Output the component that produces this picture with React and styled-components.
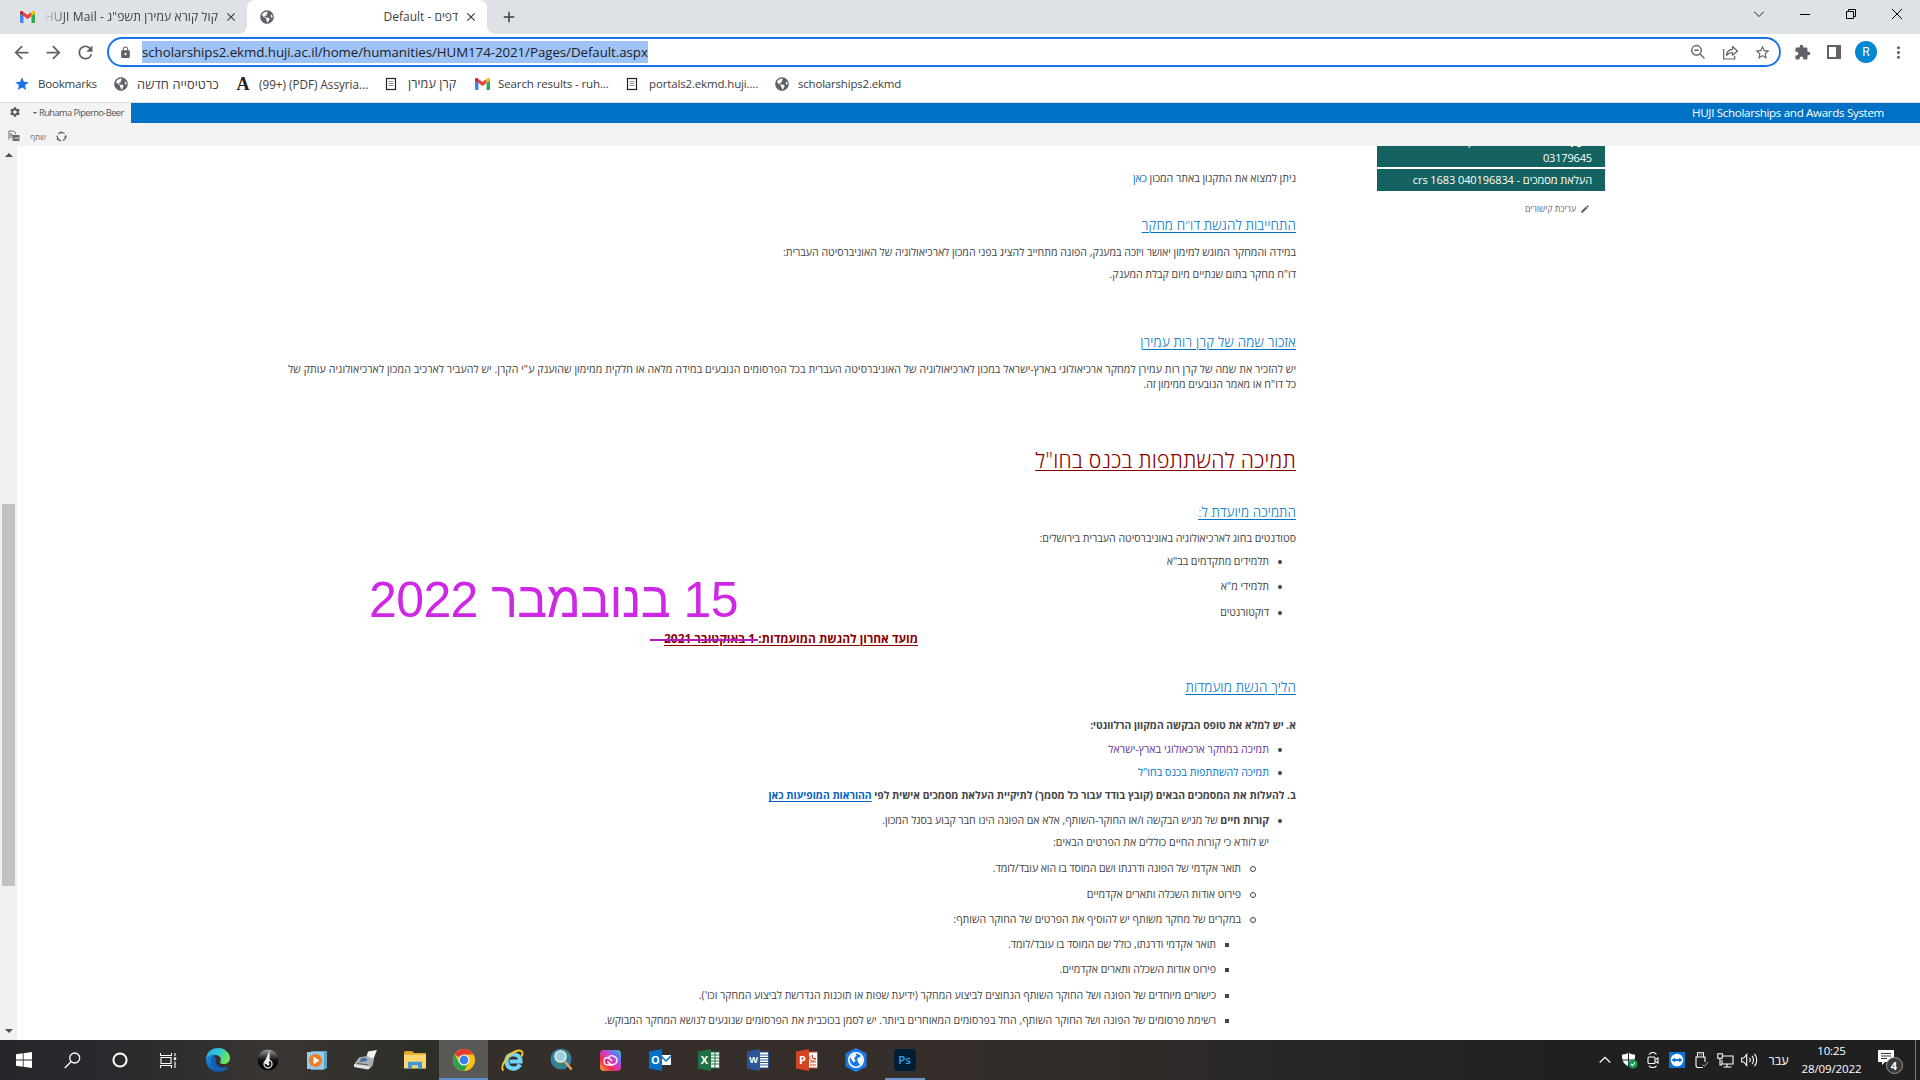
import React from "react";
import styled, { createGlobalStyle, css } from "styled-components";
import {
  MdArrowBack, MdArrowForward, MdRefresh, MdLock, MdStar, MdStarBorder,
  MdExtension, MdMoreVert, MdClose, MdAdd, MdEdit, MdSettings,
} from "react-icons/md";
import { FaGlobeAmericas } from "react-icons/fa";

const Global = createGlobalStyle`
  * { box-sizing: border-box; }
  body { margin: 0; background: #fff; overflow: hidden; }
`;

const Screen = styled.div`
  width: 1920px;
  height: 1080px;
  display: flex;
  flex-direction: column;
  overflow: hidden;
  background: #fff;
  font-family: "Open Sans", "Noto Sans", sans-serif;
  color: #444;
`;

const Text = styled.span`
  white-space: nowrap;
  font-size: ${(p) => p.$size || 12}px;
  letter-spacing: ${(p) => p.$ls || 0}px;
  font-weight: ${(p) => p.$weight || 400};
  color: ${(p) => p.$color || "inherit"};
`;

/* ---------- browser chrome ---------- */

const TabStrip = styled.div`
  height: 34px;
  flex: none;
  display: flex;
  background: #dee1e6;
`;

const Tab = styled.div`
  width: ${(p) => p.$w}px;
  height: 34px;
  display: flex;
  align-items: center;
  padding: 0 9px 0 ${(p) => p.$pad}px;
  color: #3c4043;
  position: relative;
  ${(p) => p.$active && css`
    background: #fff;
    border-radius: 8px 8px 0 0;
    &::before, &::after {
      content: "";
      position: absolute;
      bottom: 0;
      width: 8px;
      height: 8px;
    }
    &::before {
      left: -8px;
      background: radial-gradient(circle at 0 0, transparent 7.5px, #fff 8px);
    }
    &::after {
      right: -8px;
      background: radial-gradient(circle at 100% 0, transparent 7.5px, #fff 8px);
    }
  `}
`;

const TabTitle = styled.div`
  flex: 1;
  margin: 0 6px 0 9px;
  overflow: hidden;
  direction: rtl;
  display: flex;
  line-height: 20px;
  ${(p) => p.$fade && css`
    mask-image: linear-gradient(90deg, transparent 0, #000 22px);
  `}
`;

const NewTab = styled.div`
  width: 44px;
  display: grid;
  place-items: center;
  color: #3c4043;
  padding-bottom: 1px;
`;

const WindowButtons = styled.div`
  margin-left: auto;
  display: flex;
  height: 28px;
`;

const WindowButton = styled.div`
  width: 46px;
  display: grid;
  place-items: center;
`;

const Toolbar = styled.div`
  height: 35px;
  flex: none;
  display: flex;
  align-items: center;
  padding: 1px 6px 0 5px;
  color: #5f6368;
`;

const Cell = styled.div`
  width: ${(p) => p.$w || 32}px;
  flex: none;
  display: grid;
  place-items: center;
`;

const Omnibox = styled.div`
  flex: 1;
  height: 30px;
  margin: 0 5px 0 6px;
  border: 2px solid #1a73e8;
  border-radius: 15px;
  display: flex;
  align-items: center;
  padding-right: 1px;
`;

const Selection = styled.div`
  height: 22px;
  line-height: 21px;
  background: #9ec3f6;
  color: #202124;
  margin-right: auto;
`;

const Avatar = styled.div`
  width: 22px;
  height: 22px;
  border-radius: 50%;
  background: #0288d1;
  color: #fff;
  font: 12px/22px Roboto, sans-serif;
  text-align: center;
`;

const Bookmarks = styled.div`
  height: 34px;
  flex: none;
  display: flex;
  align-items: center;
  padding: 0 0 4px 14px;
  border-bottom: 1px solid #dadce0;
  color: #3c4043;
`;

const Bookmark = styled.div`
  width: ${(p) => p.$w}px;
  display: flex;
  align-items: center;
  gap: ${(p) => p.$gap || 8}px;
  color: #5f6368;
`;

/* ---------- site header ---------- */

const SuiteBar = styled.div`
  height: 20px;
  flex: none;
  display: flex;
  justify-content: space-between;
  align-items: stretch;
  background: #0072c6;
  color: #fff;
`;

const UserBox = styled.div`
  width: 131px;
  background: #f3f3f3;
  color: #555;
  display: flex;
  align-items: center;
  padding: 0 0 2px 9px;
`;

const Caret = styled.i`
  margin: 1px 2px 0 12px;
  border: 2.5px solid transparent;
  border-top-color: #555;
  border-bottom: 0;
`;

const SiteName = styled.div`
  display: flex;
  align-items: center;
  padding: 0 36px 2px 0;
`;

const Ribbon = styled.div`
  height: 23px;
  flex: none;
  background: #f3f3f3;
  display: flex;
  align-items: center;
  padding: 3px 0 0 7px;
  color: #666;
`;

/* ---------- page ---------- */

const Page = styled.div`
  height: 894px;
  flex: none;
  display: flex;
  overflow: hidden;
`;

const ScrollTrack = styled.div`
  width: 17px;
  background: #f1f1f1;
  display: flex;
  flex-direction: column;
  align-items: center;
`;

const ScrollArrow = styled.i`
  margin: ${(p) => (p.$down ? "auto 0 7px" : "7px 0 0")};
  border: 4px solid transparent;
  border-${(p) => (p.$down ? "top" : "bottom")}-color: #505050;
  border-${(p) => (p.$down ? "bottom" : "top")}: 0;
`;

const Thumb = styled.div`
  width: 13px;
  height: 382px;
  margin-top: 347px;
  background: #c1c1c1;
`;

const Article = styled.article`
  width: 1009px;
  margin-left: 270px;
  padding-top: 24px;
  position: relative;
  direction: rtl;
  font-size: 10.6px;
`;

const Line = styled.p`
  margin: ${(p) => p.$mt || 0}px ${(p) => p.$indent || 0}px 0 0;
  line-height: ${(p) => p.$lh || 16}px;
  white-space: nowrap;
  letter-spacing: ${(p) => p.$ls || 0}px;
  font-size: ${(p) => p.$size || 10.6}px;
  font-weight: ${(p) => (p.$bold ? 700 : 400)};
`;

const Heading = styled.h3`
  margin: ${(p) => p.$mt}px 0 0;
  font-size: ${(p) => p.$size || 13.5}px;
  line-height: ${(p) => p.$lh || 20}px;
  letter-spacing: ${(p) => (p.$ls === undefined ? 0.16 : p.$ls)}px;
  font-weight: 300;
  color: ${(p) => p.$color || "#0072c6"};
  text-decoration: underline;
  text-decoration-thickness: 1px;
  text-underline-offset: 1.5px;
  white-space: nowrap;
`;

const Item = styled(Line)`
  display: flex;
  align-items: center;
  white-space: pre;
  &::before {
    content: "";
    flex: none;
    width: 4px;
    height: 4px;
    margin: 1px 0 0 9px;
    border-radius: ${(p) => (p.$mark === "square" ? 0 : "50%")};
    ${(p) => (p.$mark === "circle"
    ? "border: 1px solid #444;"
    : "background: #444;")}
  }
`;

const Link = styled.a`
  color: ${(p) => (p.$visited ? "#663399" : "#0072c6")};
  ${(p) => p.$underline && css`
    color: #0563c1;
    text-decoration: underline;
    text-underline-offset: 2px;
  `}
`;

const Deadline = styled(Line)`
  color: #8b0000;
  span {
    text-decoration: underline;
    text-decoration-thickness: 1px;
    text-underline-offset: 2px;
  }
`;

const NewDate = styled.div`
  position: absolute;
  left: 82px;
  top: 425px;
  font: 50px/58px "Liberation Sans", sans-serif;
  letter-spacing: -0.6px;
  color: #cf27e6;
  white-space: nowrap;
`;

const Strike = styled.div`
  position: absolute;
  left: 363px;
  top: 493px;
  width: 108px;
  height: 2px;
  background: #b21bc8;
`;

const SideNav = styled.nav`
  width: 228px;
  margin-left: 81px;
  direction: rtl;
  color: #fff;
`;

const NavItem = styled.div`
  height: ${(p) => p.$h}px;
  margin-bottom: 2px;
  padding: 0 13px;
  background: #156361;
  line-height: 18px;
  display: flex;
  flex-direction: column;
  justify-content: ${(p) => (p.$cut ? "space-between" : "center")};
`;

const EditLinks = styled.div`
  display: flex;
  align-items: center;
  gap: 4px;
  padding: 10px 15px;
  color: #666;
`;

/* ---------- taskbar ---------- */

const Taskbar = styled.footer`
  height: 40px;
  flex: none;
  display: flex;
  background: linear-gradient(90deg, #25272b 0, #2b2b2e 150px, #3a3532 270px, #2e2e28 430px, #352f2c 520px, #352e2b 940px, #2a2827 1250px, #202020 1560px);
  color: #fff;
`;

const TaskButton = styled.div`
  width: ${(p) => p.$w || 49}px;
  display: grid;
  place-items: center;
  background: ${(p) => (p.$active ? "#5a5856" : "transparent")};
  box-shadow: ${(p) => (p.$active ? "inset 0 -2px #5f8fcb" : "none")};
`;

const Running = styled(TaskButton)`
  background: linear-gradient(#6a94cc, #6a94cc) 50% 100% / 40px 2px no-repeat;
`;

const Tray = styled.div`
  margin-left: auto;
  display: flex;
  align-items: stretch;
  padding-right: 4px;
`;

const Clock = styled.div`
  width: 72px;
  display: flex;
  flex-direction: column;
  align-items: center;
  justify-content: center;
  line-height: 18px;
  padding: 0 1px 1px 0;
`;

const Notifications = styled.div`
  width: 48px;
  display: grid;
  place-items: center;
  border-right: 1px solid #777;
`;

/* ---------- drawings ---------- */

const Svg = ({ w = 24, h, box = "0 0 24 24", children }) => (
  <svg width={w} height={h || w} viewBox={box} fill="none">{children}</svg>
);

const Gmail = () => (
  <Svg w={15} h={12} box="0 0 30 24">
    <path d="M0 22V4l7 5v15H2a2 2 0 0 1-2-2z" fill="#4285f4" />
    <path d="M23 24V9l7-5v18a2 2 0 0 1-2 2z" fill="#34a853" />
    <path d="M7 10V2l8 6 8-6v8l-8 6z" fill="#ea4335" />
    <path d="M0 4.500V3c0-3 3-4 5-2.500L7 2v8L0 5z" fill="#c5221f" />
    <path d="M30 4.500V3c0-3-3-4-5-2.500L23 2v8l7-5z" fill="#fbbc04" />
  </Svg>
);

const DocIcon = () => (
  <Svg w={16} box="0 0 16 16">
    <rect x="3.500" y="2.500" width="9" height="11" fill="#fff" stroke="#222" strokeWidth="1.200" />
    <path d="M5.500 5.500h5M5.500 7.500h5M5.500 9.500h5" stroke="#777" strokeWidth=".8" />
  </Svg>
);

const LetterMark = styled.span`
  width: 16px;
  text-align: center;
  font: 700 18px/16px "Liberation Serif", serif;
  color: #222;
`;

const ZoomOut = () => (
  <Svg w={16} box="0 0 16 16">
    <circle cx="6.500" cy="6.300" r="4.800" stroke="#5f6368" strokeWidth="1.400" />
    <path d="M10 10l4.500 4.500M4.300 6.300h4.400" stroke="#5f6368" strokeWidth="1.400" />
  </Svg>
);

const Share = () => (
  <Svg w={17} box="0 0 17 17">
    <path d="M1.700 5v10h11v-3" stroke="#5f6368" strokeWidth="1.200" />
    <path d="M4.500 11.500c.3-4 2.500-6 6-6.200V2.500L15.500 7l-5 4.200V8.500c-2.600 0-4.400.8-6 3z" stroke="#5f6368" strokeWidth="1.200" strokeLinejoin="round" />
  </Svg>
);

const Panel = () => (
  <Svg w={14} box="0 0 14 14">
    <path d="M0 0h14v14H0zM2 2v10h7V2z" fill="#5f6368" fillRule="evenodd" />
  </Svg>
);

const PageSwap = () => (
  <Svg w={12} box="0 0 12 12">
    <path d="M1 9.500V1h4.500l2 2v1M3 5h2M3 3v5" stroke="#666" />
    <rect x="4.500" y="5" width="7" height="6" fill="#666" />
    <path d="M6 9.500l1.300-2 1 1.200L9.500 7l1 2.500" stroke="#f3f3f3" strokeWidth=".7" />
  </Svg>
);

const ShareRing = () => (
  <Svg w={11} box="0 0 11 11">
    <circle cx="5.500" cy="5.500" r="4.200" stroke="#666" strokeWidth="1.300" strokeDasharray="7 1.800" strokeDashoffset="2" />
    <path d="M4 0l2.400 1.500-2.200 1.800zM11 5.200L9.400 7.600 8 5.600zM.6 9.300l.5-2.800 2.200 1.300z" fill="#666" />
  </Svg>
);

const Windows = () => (
  <Svg w={16} box="0 0 16 16">
    <path d="M0 2.300L6.800 1.300v6.300H0zM7.600 1.200L16 0v7.600H7.600zM0 8.400h6.800v6.300L0 13.700zM7.600 8.400H16V16l-8.400-1.200z" fill="#fff" />
  </Svg>
);

const Search = () => (
  <Svg w={17} box="0 0 17 17">
    <circle cx="10.700" cy="6" r="5" stroke="#fff" strokeWidth="1.300" />
    <path d="M7 9.700L.8 16" stroke="#fff" strokeWidth="1.300" />
  </Svg>
);

const Cortana = () => <Svg w={16} box="0 0 16 16"><circle cx="8" cy="8" r="6.600" stroke="#fff" strokeWidth="2" /></Svg>;

const TaskView = () => (
  <Svg w={17} box="0 0 17 17">
    <path d="M.5 1v2.500h11V1M.5 16v-2.500h11V16M1 5.500h10v6H1zM15 1v3M15 9.500V16" stroke="#fff" strokeWidth="1.100" />
    <rect x="13.800" y="5.300" width="2.400" height="2.600" fill="#fff" />
  </Svg>
);

const Edge = () => (
  <Svg w={24}>
    <defs>
      <linearGradient id="edgeTop" x1="0" y1="0" x2="1" y2=".4"><stop stopColor="#2aa6dc" /><stop offset=".5" stopColor="#2fc5dc" /><stop offset="1" stopColor="#6ae65a" /></linearGradient>
      <linearGradient id="edgeLow" x1="0" y1="0" x2="1" y2="1"><stop stopColor="#1a8de0" /><stop offset="1" stopColor="#0c4fa8" /></linearGradient>
    </defs>
    <path d="M0 12C0 4 6 0 12 0c7 0 12 5 12 10 0 4-3 6-6.500 6-3 0-4-1.200-3.200-2.300C16 11 14 7 9.500 7 5 7 1 9 0 12z" fill="url(#edgeTop)" />
    <path d="M0 12c1-4 5-6 9-5-3 1-5 5-3.500 9.500C7 21 12 23.500 16 23 6.500 26 0 19 0 12z" fill="url(#edgeLow)" />
    <path d="M9.500 10C5 14 8 22 15 22c3 0 6-1.500 7.300-3.600C18 20.500 8 20 9.500 10z" fill="#1557a8" />
    <path d="M7 8c-4 5-2.500 15 8 15.500 3.500 0 6-2.500 7-4.500-8 3-15-2-12-9z" fill="#1560b4" />
  </Svg>
);

const Audio = () => (
  <Svg w={22} box="0 0 22 22">
    <defs><linearGradient id="dark" x1="0" y1="0" x2="0" y2="1"><stop stopColor="#9b9b9b" /><stop offset=".5" stopColor="#111" /><stop offset="1" stopColor="#000" /></linearGradient></defs>
    <circle cx="11" cy="11" r="10.500" fill="url(#dark)" />
    <circle cx="11" cy="15" r="4" stroke="#ddd" strokeWidth="1.400" />
    <path d="M12.500 1.500L8.500 11l-1 4h3l2.200-3z" fill="#eee" />
    <circle cx="11" cy="15" r="1.500" fill="#eee" />
  </Svg>
);

const MediaPlayer = () => (
  <Svg w={20} box="0 0 20 20">
    <path d="M4 1h16v17l-4 2H4z" fill="#5fa3c9" /><rect y="2" width="17" height="17" fill="#9cc9e2" />
    <circle cx="8.500" cy="10.500" r="6.500" fill="#f07a1c" /><path d="M6.500 6.500v8l6-4z" fill="#fff" />
  </Svg>
);

const Printer = () => (
  <Svg w={23} h={20} box="0 0 23 20">
    <path d="M14 1.500L23 0l-4 10-7-2z" fill="#f4f4f4" />
    <path d="M5 7.500l8-1.500 7 3-1.500 7L14 19 1 17v-4z" fill="#a9adb1" />
    <path d="M0 14l12 1.500 5 2-3 2L0 17z" fill="#e2e2e2" /><path d="M7 8.500l5-.8 1.500 3L5.500 12z" fill="#3c6f9c" />
    <path d="M3 13.500l11 1.400" stroke="#555" />
  </Svg>
);

const Folder = () => (
  <Svg w={22} h={18} box="0 0 22 18">
    <path d="M0 1.500Q0 0 1.500 0H8l2 2h12v4H0z" fill="#e0a52a" /><rect y="3.500" width="22" height="14" fill="#ffd66e" />
    <path d="M4 17.800v-7h14v7h-4v-3.500H8v3.500z" fill="#3f97d8" />
  </Svg>
);

const Chrome = () => (
  <Svg w={22} box="0 0 22 22">
    <circle cx="11" cy="11" r="11" fill="#fbc116" />
    <path d="M11 11L1.500 5.500A11 11 0 0 1 20.500 5.500H11z" fill="#e33b2e" />
    <path d="M1.500 5.500A11 11 0 0 0 11 22l4.800-8.300L11 11 6.200 13.700z" fill="#2ba24c" />
    <circle cx="11" cy="11" r="5.500" fill="#fff" /><circle cx="11" cy="11" r="4.400" fill="#3b7ded" />
  </Svg>
);

const Explorer = () => (
  <Svg w={23} box="0 0 23 23">
    <path d="M19 15.500c-3 6.500-13.500 5-13.500-3.500 0-9 14-9 14 .5H8.500" stroke="#6fd4f6" strokeWidth="4.200" />
    <path d="M2.500 21.500C-2 18 8 2.500 18 1.500c4-.3 4 3 2.500 6" stroke="#f6c62c" strokeWidth="2" />
  </Svg>
);

const ArcMap = () => (
  <Svg w={24}>
    <circle cx="11" cy="11" r="10.500" fill="#2d7fae" /><path d="M3 6c4 0 6-4 9-5 5 1 8 5 8 8-5 2-6 8-10 12C6 18 4 12 3 6z" fill="#3f8a66" />
    <circle cx="10.500" cy="8.500" r="5.500" fill="#9fcfe4" stroke="#e6eef2" strokeWidth="1.500" /><path d="M14.500 13l7 8.500" stroke="#e0a35a" strokeWidth="2.500" />
  </Svg>
);

const CreativeCloud = () => (
  <Svg w={21} box="0 0 21 21">
    <defs><linearGradient id="cc" x1="0" y1="1" x2="1" y2="0"><stop stopColor="#f9b32a" /><stop offset=".3" stopColor="#ee2d4e" /><stop offset=".55" stopColor="#d93bc6" /><stop offset=".8" stopColor="#5a7cf0" /><stop offset="1" stopColor="#3fd5b8" /></linearGradient></defs>
    <rect width="21" height="21" rx="4" fill="url(#cc)" />
    <path d="M7.500 15A3.800 3.800 0 0 1 7 7.500c2.500 0 3.500 2 5 3.800M8.500 7.500C10.500 4 17.500 6 17 11c-.6 4-6 4.500-8 2l-1.500-1.500M7.500 15h6" stroke="#fff" strokeWidth="1.300" />
  </Svg>
);

const OfficeMark = styled.span`
  position: absolute;
  left: 2px;
  top: 4px;
  width: 10px;
  font: 700 ${(p) => (p.$small ? 9 : 11)}px/14px "Open Sans", sans-serif;
  text-align: center;
  color: #fff;
`;

const OfficeBox = styled.div`
  position: relative;
  width: 22px;
  height: 22px;
`;

const Office = ({ color, letter, children }) => (
  <OfficeBox>
    <Svg w={22} box="0 0 22 22">
      {children}
      <path d="M0 2.500L13 0v22L0 19.500z" fill={color} />
    </Svg>
    <OfficeMark $small={letter === "W"}>{letter}</OfficeMark>
  </OfficeBox>
);

const Sheet = ({ color, d }) => (
  <>
    <rect x="12" y="3" width="9.500" height="16" fill="#fff" stroke={color} />
    <path d={d} stroke={color} strokeWidth="1" />
  </>
);

const HexGlobe = () => (
  <Svg w={22} h={24} box="0 0 22 24">
    <path d="M11 0l10.500 5.500v13L11 24 .5 18.500v-13z" fill="#1b7be6" />
    <circle cx="11" cy="12" r="7.200" stroke="#fff" strokeWidth="1.600" />
    <path d="M5 9l5-4 1.500 2.500L9 10l1.500 3-2 1.500zM12 11l4-3 2 4-3 5-1.500-2z" fill="#fff" />
  </Svg>
);

const Photoshop = styled.div`
  width: 22px;
  height: 22px;
  border-radius: 4px;
  background: #001e36;
  color: #31a8ff;
  font: 600 11.5px/21px "Open Sans", sans-serif;
  text-align: center;
`;

const Shield = () => (
  <Svg w={17} box="0 0 17 17">
    <path d="M7.500.5C9 2 11.500 2.600 14 2.600c.3 6-1.500 9.500-6.500 12C2.500 12 .7 8.600 1 2.600 3.500 2.600 6 2 7.500.5z" fill="#fff" />
    <path d="M7.500 1v14M1 8h13" stroke="#222" />
    <circle cx="12" cy="12" r="4.500" fill="#159a4a" /><path d="M10 12l1.500 1.500 2.700-3" stroke="#fff" strokeWidth="1.100" />
  </Svg>
);

const Camera = () => (
  <Svg w={16} box="0 0 16 16">
    <rect x="3" y="5" width="7" height="6.500" rx="1" stroke="#fff" strokeWidth="1.100" />
    <path d="M10.500 7.500l2.500-1.500v5l-2.500-1.500M4 2.500C6-.2 9.500-.2 11.500 2.500M4 13.800c2 2.400 5.500 2.400 7.500 0" stroke="#fff" strokeWidth="1.100" />
  </Svg>
);

const TeamViewer = () => (
  <Svg w={16} box="0 0 16 16">
    <rect width="16" height="16" fill="#0e73d6" /><circle cx="8" cy="8" r="6.300" fill="#fff" />
    <path d="M2.500 8l3.300-2.600V7h4.400V5.400L13.500 8l-3.300 2.600V9H5.800v1.600z" fill="#0e73d6" />
  </Svg>
);

const Usb = () => (
  <Svg w={15} h={16} box="0 0 15 16">
    <path d="M3.500 5V.8h6V5M5.500 2.800h.8M7.200 2.800H8M9 15.500H4c-1 0-2-.5-2-2V5h9v5" stroke="#fff" strokeWidth="1.100" />
    <path d="M8.500 12.500l2 2 3.500-4.500" stroke="#aaa" />
  </Svg>
);

const Network = () => (
  <Svg w={17} h={15} box="0 0 17 15">
    <path d="M6 3h10v8H5V7M10 11v3M6.500 14h8M.8.8h4.500v4.500H.8zM3 5.500V12h2" stroke="#fff" strokeWidth="1.100" />
  </Svg>
);

const Sound = () => (
  <Svg w={17} h={14} box="0 0 17 14">
    <path d="M.7 5h2l3-3.500v11l-3-3.500h-2zM8.500 5c1 1 1 3 0 4M11 3c2 2 2 6 0 8M13.500 1c3 3 3 9 0 12" stroke="#fff" strokeWidth="1.100" />
  </Svg>
);

const BubbleBox = styled.div`
  position: relative;
  width: 24px;
  height: 26px;
  margin: 3px 4px 0 0;
`;

const Badge = styled.span`
  position: absolute;
  left: 8px;
  top: 8px;
  width: 17px;
  height: 17px;
  border: 1px solid #999;
  border-radius: 50%;
  background: #3a3a3a;
  font: 700 11px/15px "Open Sans", sans-serif;
  text-align: center;
`;

const CutLine = () => (
  <Svg w={202} h={3} box="0 0 202 3">
    <path d="M80 0c0 1.200-.8 1.500-2 1.500M181 .6h2M187 .6h4" stroke="#fff" />
  </Svg>
);

/* ---------- data ---------- */

const bookmarks = [
  { icon: <MdStar size={16} color="#1a73e8" />, text: "Bookmarks", w: 99, size: 11.6, ls: -0.24 },
  { icon: <FaGlobeAmericas size={14} />, text: "כרטיסייה חדשה", w: 122, size: 12.8, ls: 0.1 },
  { icon: <LetterMark>A</LetterMark>, text: "(99+) (PDF) Assyria...", w: 148, size: 11.7, ls: 0 },
  { icon: <DocIcon />, text: "קרן עמירן", w: 91, size: 12.6, ls: 0.05, gap: 9 },
  { icon: <Gmail />, text: "Search results - ruh...", w: 150, size: 11.6, ls: -0.15 },
  { icon: <DocIcon />, text: "portals2.ekmd.huji....", w: 150, size: 11.5, ls: -0.15, gap: 9 },
  { icon: <FaGlobeAmericas size={14} />, text: "scholarships2.ekmd", w: 150, size: 11.5, ls: -0.2 },
];

const members = ["תלמידים מתקדמים בב\"א", "תלמידי מ\"א", "דוקטורנטים"];
const memberGaps = [7, 9, 10];

const details = [
  { text: "תואר אקדמי של הפונה ודרגתו ושם המוסד בו הוא עובד/לומד.", mt: 10, ls: -0.1 },
  { text: "פירוט אודות השכלה ותארים אקדמיים", mt: 10, ls: -0.04 },
  { text: "במקרים של מחקר משותף יש להוסיף את הפרטים של החוקר השותף:", mt: 9, ls: 0 },
];

const partner = [
  { text: "תואר אקדמי ודרגתו, כולל שם המוסד בו עובד/לומד.", mt: 9, ls: -0.07 },
  { text: "פירוט אודות השכלה ותארים אקדמיים.", mt: 9, ls: -0.05 },
  { text: "כישורים מיוחדים של הפונה ושל החוקר השותף הנחוצים לביצוע המחקר (ידיעת שפות או תוכנות הנדרשת לביצוע המחקר וכו').", mt: 10, ls: -0.035 },
  { text: "רשימת פרסומים של הפונה ושל החוקר השותף, החל בפרסומים המאוחרים ביותר. יש לסמן בכוכבית את הפרסומים שנוגעים לנושא המחקר המבוקש.", mt: 9, ls: 0 },
];

export default function App() {
  return (
    <Screen>
      <Global />
      <TabStrip>
        <Tab $w={247} $pad={20}>
          <Gmail />
          <TabTitle $fade><Text $size={12.1} $ls={0.1}>קול קורא עמירן תשפ"ג - HUJI Mail</Text></TabTitle>
          <MdClose size={14} />
        </Tab>
        <Tab $w={240} $pad={13} $active>
          <FaGlobeAmericas size={14} color="#5f6368" />
          <TabTitle><Text $size={12}>דפים - Default</Text></TabTitle>
          <MdClose size={14} />
        </Tab>
        <NewTab><MdAdd size={18} /></NewTab>
        <WindowButtons>
          <WindowButton><Svg w={10} box="0 0 10 10"><path d="M0 2.500l5 5 5-5" stroke="#222" /></Svg></WindowButton>
          <WindowButton><Svg w={10} box="0 0 10 10"><path d="M0 5.500h10" stroke="#000" /></Svg></WindowButton>
          <WindowButton><Svg w={10} box="0 0 10 10"><path d="M.5 2.500h7v7h-7zM2.500 2.500v-2h7v7h-2" stroke="#000" /></Svg></WindowButton>
          <WindowButton><Svg w={10} box="0 0 10 10"><path d="M0 0l10 10M10 0L0 10" stroke="#000" /></Svg></WindowButton>
        </WindowButtons>
      </TabStrip>

      <Toolbar>
        <Cell><MdArrowBack size={21} /></Cell>
        <Cell><MdArrowForward size={21} /></Cell>
        <Cell><MdRefresh size={21} /></Cell>
        <Omnibox>
          <Cell $w={33}><MdLock size={13} /></Cell>
          <Selection><Text $size={13.3} $ls={-0.055}>scholarships2.ekmd.huji.ac.il/home/humanities/HUM174-2021/Pages/Default.aspx</Text></Selection>
          <Cell><ZoomOut /></Cell>
          <Cell><Share /></Cell>
          <Cell><MdStarBorder size={17} /></Cell>
        </Omnibox>
        <Cell><MdExtension size={17} /></Cell>
        <Cell><Panel /></Cell>
        <Cell><Avatar>R</Avatar></Cell>
        <Cell><MdMoreVert size={19} /></Cell>
      </Toolbar>

      <Bookmarks>
        {bookmarks.map((b) => (
          <Bookmark key={b.text} $w={b.w} $gap={b.gap}>
            <Cell $w={16}>{b.icon}</Cell>
            <Text $size={b.size} $ls={b.ls} $color="#3c4043">{b.text}</Text>
          </Bookmark>
        ))}
      </Bookmarks>

      <SuiteBar>
        <UserBox>
          <MdSettings size={12} />
          <Caret />
          <Text $size={9.4} $ls={-0.62}>Ruhama Piperno-Beer</Text>
        </UserBox>
        <SiteName><Text $size={11.6} $ls={-0.33}>HUJI Scholarships and Awards System</Text></SiteName>
      </SuiteBar>
      <Ribbon>
        <Cell $w={14}><PageSwap /></Cell>
        <Cell $w={34}><Text $size={8} dir="rtl">שתף</Text></Cell>
        <Cell $w={12}><ShareRing /></Cell>
      </Ribbon>

      <Page>
        <ScrollTrack>
          <ScrollArrow />
          <Thumb />
          <ScrollArrow $down />
        </ScrollTrack>

        <Article>
          <Line $ls={-0.01}>ניתן למצוא את התקנון באתר המכון <Link>כאן</Link></Line>

          <Heading $mt={29} $ls={0.12}>התחייבות להגשת דו"ח מחקר</Heading>
          <Line $mt={9} $ls={-0.02}>במידה והמחקר המוגש למימון יאושר ויזכה במענק, הפונה מתחייב להציג בפני המכון לארכיאולוגיה של האוניברסיטה העברית:</Line>
          <Line $mt={6} $ls={-0.03}>דו"ח מחקר בתום שנתיים מיום קבלת המענק.</Line>

          <Heading $mt={50} $ls={0.2}>אזכור שמה של קרן רות עמירן</Heading>
          <Line $mt={10} $lh={15} $ls={0.067}>
            יש להזכיר את שמה של קרן רות עמירן למחקר ארכיאולוגי בארץ-ישראל במכון לארכיאולוגיה של האוניברסיטה העברית בכל הפרסומים הנובעים במידה מלאה או חלקית ממימון שהוענק ע"י הקרן. יש להעביר לארכיב המכון לארכיאולוגיה עותק של
            <br />
            <Text $size={10.6} $ls={-0.04}>כל דו"ח או מאמר הנובעים ממימון זה.</Text>
          </Line>

          <Heading $mt={53} $size={21.2} $lh={30} $ls={0.3} $color="#8b0000">תמיכה להשתתפות בכנס בחו"ל</Heading>

          <Heading $mt={27} $ls={0.1}>התמיכה מיועדת ל:</Heading>
          <Line $mt={8} $ls={-0.01}>סטודנטים בחוג לארכיאולוגיה באוניברסיטה העברית בירושלים:</Line>
          {members.map((m, i) => (
            <Item as="div" key={m} $mt={memberGaps[i]} $indent={14} $ls={-0.05}>{m}</Item>
          ))}

          <Deadline $mt={11} $indent={378} $size={11.97} $bold><span>מועד אחרון להגשת המועמדות: 1 באוקטובר 2021</span></Deadline>

          <Heading $mt={30}>הליך הגשת מועמדות</Heading>
          <Line $mt={20} $size={10.3} $bold>א. יש למלא את טופס הבקשה המקוון הרלוונטי:</Line>
          <Item as="div" $mt={8} $indent={14} $ls={0.06}><Link $visited>תמיכה במחקר ארכאולוגי בארץ-ישראל</Link></Item>
          <Item as="div" $mt={7} $indent={14} $ls={0.04}><Link>תמיכה להשתתפות בכנס בחו"ל</Link></Item>
          <Line $mt={7} $size={10.34} $bold>
            ב. להעלות את המסמכים הבאים (קובץ בודד עבור כל מסמך) לתיקיית העלאת מסמכים אישית לפי <Link $underline>ההוראות המופיעות כאן</Link>
          </Line>
          <Item as="div" $mt={9} $indent={14} $ls={-0.04}>
            <span><b>קורות חיים</b> של מגיש הבקשה ו/או החוקר-השותף, אלא אם הפונה הינו חבר קבוע בסגל המכון.</span>
          </Item>
          <Line $mt={6} $indent={27} $ls={0.02}>יש לוודא כי קורות החיים כוללים את הפרטים הבאים:</Line>
          {details.map((d) => (
            <Item as="div" key={d.text} $mt={d.mt} $ls={d.ls} $indent={40} $mark="circle">{d.text}</Item>
          ))}
          {partner.map((d) => (
            <Item as="div" key={d.text} $mt={d.mt} $ls={d.ls} $indent={67} $mark="square">{d.text}</Item>
          ))}

          <NewDate>15 בנובמבר 2022</NewDate>
          <Strike />
        </Article>

        <SideNav>
          <NavItem $h={21} $cut>
            <CutLine />
            <Text $size={11} $ls={-0.15} $weight={500}>03179645</Text>
          </NavItem>
          <NavItem $h={22}><Text $size={11} $ls={-0.08} $weight={500}>העלאת מסמכים - crs 1683 040196834</Text></NavItem>
          <EditLinks>
            <MdEdit size={10} />
            <Text $size={8.7}>עריכת קישורים</Text>
          </EditLinks>
        </SideNav>
      </Page>

      <Taskbar>
        <TaskButton $w={48}><Windows /></TaskButton>
        <TaskButton $w={48}><Search /></TaskButton>
        <TaskButton $w={48}><Cortana /></TaskButton>
        <TaskButton $w={49}><TaskView /></TaskButton>
        <TaskButton $w={50}><Edge /></TaskButton>
        <TaskButton><Audio /></TaskButton>
        <TaskButton><MediaPlayer /></TaskButton>
        <TaskButton><Printer /></TaskButton>
        <TaskButton><Folder /></TaskButton>
        <TaskButton $active><Chrome /></TaskButton>
        <TaskButton><Explorer /></TaskButton>
        <TaskButton><ArcMap /></TaskButton>
        <TaskButton><CreativeCloud /></TaskButton>
        <TaskButton>
          <Office color="#0072c6" letter="O">
            <rect x="12" y="6" width="10" height="10" fill="#fff" />
            <path d="M12 7l5 5 5-5" stroke="#0072c6" strokeWidth="1.500" />
          </Office>
        </TaskButton>
        <TaskButton><Office color="#207245" letter="X"><Sheet color="#207245" d="M13 6h8M13 9h8M13 12h8M13 15h8M17 3v16" /></Office></TaskButton>
        <TaskButton><Office color="#2b5797" letter="W"><Sheet color="#2b5797" d="M13 6h8M13 8.500h8M13 11h8M13 13.500h8M13 16h8" /></Office></TaskButton>
        <TaskButton><Office color="#d24625" letter="P"><Sheet color="#d24625" d="M14 13h6M14 16h6M16.500 6v3.500h3.500M15 6.500a3 3 0 1 0 4.500 3.500" /></Office></TaskButton>
        <TaskButton><HexGlobe /></TaskButton>
        <Running><Photoshop>Ps</Photoshop></Running>

        <Tray>
          <Cell $w={24}><Svg w={12} h={8} box="0 0 12 8"><path d="M.7 6.500L6 1.300l5.300 5.200" stroke="#fff" strokeWidth="1.200" /></Svg></Cell>
          <Cell $w={24}><Shield /></Cell>
          <Cell $w={24}><Camera /></Cell>
          <Cell $w={24}><TeamViewer /></Cell>
          <Cell $w={24}><Usb /></Cell>
          <Cell $w={24}><Network /></Cell>
          <Cell $w={24}><Sound /></Cell>
          <Cell $w={35}><Text $size={12.4}>עבר</Text></Cell>
          <Clock>
            <Text $size={11.5} $ls={-0.15}>10:25</Text>
            <Text $size={11.5} $ls={-0.12}>28/09/2022</Text>
          </Clock>
          <Notifications>
            <BubbleBox>
              <Svg w={16} h={16} box="0 0 16 16"><path d="M0 0h16v12H7l-3 3v-3H0z" fill="#fff" /><path d="M3 3.500h10M3 6h10M3 8.500h6" stroke="#333" /></Svg>
              <Badge>4</Badge>
            </BubbleBox>
          </Notifications>
        </Tray>
      </Taskbar>
    </Screen>
  );
}
